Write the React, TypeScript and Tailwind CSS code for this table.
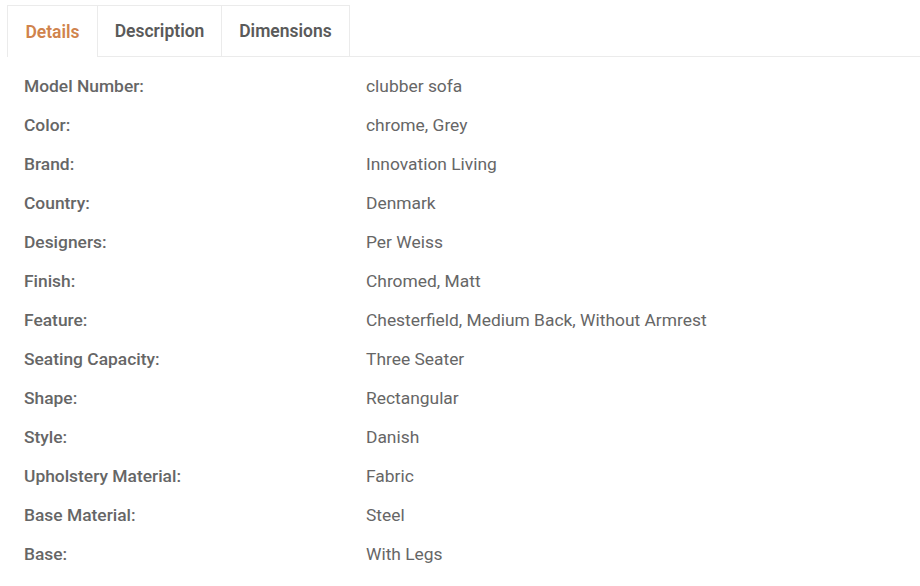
import React from "react";

const rows: [string, string][] = [
  ["Model Number:", "clubber sofa"],
  ["Color:", "chrome, Grey"],
  ["Brand:", "Innovation Living"],
  ["Country:", "Denmark"],
  ["Designers:", "Per Weiss"],
  ["Finish:", "Chromed, Matt"],
  ["Feature:", "Chesterfield, Medium Back, Without Armrest"],
  ["Seating Capacity:", "Three Seater"],
  ["Shape:", "Rectangular"],
  ["Style:", "Danish"],
  ["Upholstery Material:", "Fabric"],
  ["Base Material:", "Steel"],
  ["Base:", "With Legs"],
];

export default function App() {
  return (
    <div
      className="w-[920px] h-[586px] bg-white overflow-hidden"
      style={{ fontFamily: "Roboto, 'Liberation Sans', sans-serif" }}
    >
      <div className="flex pt-[5px] pl-[7px]">
        <div className="w-[91px] h-[52px] pt-[1px] border-t border-l border-r border-[#ebebeb] flex items-center justify-center text-[17.5px] font-semibold text-[#d0834c]">
          Details
        </div>
        <div className="w-[124px] h-[52px] pt-[1px] border-t border-r border-b border-[#ebebeb] flex items-center justify-center text-[17.5px] font-semibold text-[#5a5a5a]">
          Description
        </div>
        <div className="w-[128px] h-[52px] pt-[1px] border-t border-r border-b border-[#ebebeb] flex items-center justify-center text-[17.5px] font-semibold text-[#5a5a5a]">
          Dimensions
        </div>
        <div className="flex-1 h-[52px] border-b border-[#ebebeb]" />
      </div>
      <div className="pt-[10px]">
        {rows.map(([k, v]) => (
          <div key={k} className="flex h-[39px] items-center text-[17.4px] text-[#666666]">
            <div className="w-[366px] pl-[24px] font-medium">{k}</div>
            <div>{v}</div>
          </div>
        ))}
      </div>
    </div>
  );
}
